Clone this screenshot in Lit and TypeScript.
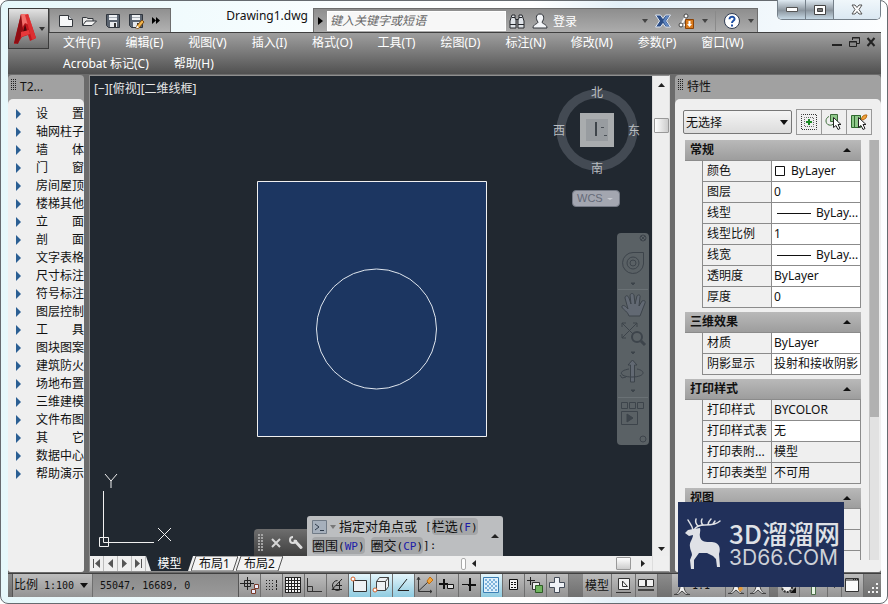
import { LitElement, html, css, svg, nothing } from "lit";
import { customElement } from "lit/decorators.js";
import { classMap } from "lit/directives/class-map.js";

const shared = css`
  * { box-sizing: border-box; }
  button, input, select {
    font: inherit; color: inherit; border: 0; padding: 0; margin: 0;
    background: none; border-radius: 0; outline: 0; white-space: nowrap;
  }
  svg { display: block; flex: none; }
  ul { list-style: none; margin: 0; padding: 0; }
`;

const icon = (w: number, h: number, body: unknown) =>
  html`<svg width=${w} height=${h} viewBox="0 0 ${w} ${h}" fill="none" aria-hidden="true">${body}</svg>`;

const caret = (color = "#222") => icon(6, 4, svg`<path d="M0 0h6L3 4z" fill=${color} />`);

/* ---------- title bar and menu ---------- */

const MENUS = ["文件(F)", "编辑(E)", "视图(V)", "插入(I)", "格式(O)", "工具(T)", "绘图(D)",
  "标注(N)", "修改(M)", "参数(P)", "窗口(W)", "Acrobat 标记(C)", "帮助(H)"];

const floppy = svg`
  <path d="M1.500 1.500h13v13h-11l-2-2z" fill="#5b6470" stroke="#2f353d" />
  <path d="M4 2h8v5H4z" fill="#eef1f4" /><path d="M4 4.500h8" stroke="#a9b0b8" />
  <path d="M5 9h7v5H5z" fill="#e6e9ec" /><path d="M9 10h2v4H9z" fill="#333" />`;

const QUICK = [
  { name: "新建", art: icon(16, 14, svg`<path d="M1.500 1.500h9l4 4v7h-13z" fill="#f6f7f8" stroke="#33373c" /><path d="M10.500 1.500v4h4" fill="#d5d9de" stroke="#33373c" />`) },
  { name: "打开", art: icon(17, 14, svg`<path d="M1.500 11V3.500h4l1.500 1h5V7" fill="#e5e5e5" stroke="#33373c" /><path d="M1.500 11.500 5 7h10.500L11 11.500z" fill="#f2f2f2" stroke="#33373c" />`) },
  { name: "保存", art: icon(16, 16, floppy) },
  { name: "另存为", art: icon(17, 16, svg`${floppy}<path d="m8 15.500 1-3 5-5.500 2 2-5 6z" fill="#f3b64c" stroke="#7b4a12" /><path d="m8 15.500 1-3 2 2z" fill="#fff" />`) },
];

@customElement("cad-header")
class CadHeader extends LitElement {
  static styles = [shared, css`
    :host { display: block; position: relative; color: #fff; font-size: 12px; }
    .title { display: flex; height: 32px; align-items: flex-end; }
    .app {
      position: absolute; left: 0; top: 8px; width: 41px; height: 41px; z-index: 1;
      display: flex; align-items: center; gap: 2px; padding-left: 4px; border: 1px solid #3b3b3b;
      background: linear-gradient(#e2e2e2, #a2a2a2 50%, #6c6c6c);
    }
    .quick {
      margin-left: 41px; width: 122px; height: 24px; display: flex; align-items: center;
      gap: 7px; padding-left: 8px; border: 1px solid #6d6d6d; border-bottom: 0;
      background: linear-gradient(#909090, #b2b2b2);
    }
    .name {
      flex: 1; min-width: 0; text-align: right; color: #111; font-size: 12px; font-weight: 400;
      margin: 0 5px 6px 0; line-height: 20px;
    }
    .info {
      flex: none; width: 445px; height: 24px; display: flex; align-items: center;
      border: 1px solid #6d6d6d; border-bottom: 0;
      background: linear-gradient(#8e8e8e, #acacac);
    }
    .play { width: 13px; height: 22px; display: grid; place-items: center; }
    .find {
      width: 179px; height: 20px; background: #f7f7f7; border: 1px solid #fff; padding: 0 2px;
      font-style: italic; color: #555;
    }
    .find::placeholder { color: #666; opacity: 1; }
    .tools { flex: 1; display: flex; align-items: center; padding: 0 3px; gap: 7px; }
    .user { display: flex; align-items: center; gap: 5px; }
    .push { margin-left: auto; }
    .rule { width: 1px; height: 20px; background: #8a8a8a; }
    .wins {
      align-self: flex-start; display: flex; margin-left: 19px; height: 20px;
      border: 1px solid #75808a; border-top: 0; border-radius: 0 0 5px 5px; overflow: hidden;
    }
    .wins button { width: 28px; display: grid; place-items: center; border-right: 1px solid #75808a;
      background: linear-gradient(#dfeaf2, #8b959e 55%, #c6d8e4); }
    .wins .close { width: 46px; border: 0; background: linear-gradient(#f0f7fb, #dbe8f2); }
    .bar {
      display: flex; align-items: flex-start; box-shadow: inset 0 1px #3f3f3f;
      background: linear-gradient(#a0a0a0, #7d7d7d 45%, #505050); padding-left: 55px;
    }
    nav { flex: 1; display: flex; flex-wrap: wrap; column-gap: 25px; }
    nav button { height: 21px; line-height: 21px; }
    .doc { display: flex; align-items: center; gap: 5px; padding: 0 4px; height: 20px; }
  `];

  render() {
    return html`
      <button class="app" aria-label="应用程序菜单">
        ${icon(24, 34, svg`
          <path d="M8 2h7l8 24-6 3-2-6-6 2-4 6-4 1z" fill="#c2161d" />
          <path d="M8 2h7l4 12-7-3-5 8z" fill="#f2706c" />
          <path d="M8 2 1 31l4 1 5-14z" fill="#8f0d13" />
          <path d="m12 12 2 7-4 1z" fill="#4e080c" />
          <path d="m8 20 8-2 1 4-9 3z" fill="#e8383a" />
          <path d="m12 3 3-1 8 24-4 2z" fill="#dd2f31" />`)}
        ${caret("#333")}
      </button>
      <div class="title">
        <div class="quick">
          ${QUICK.map((q) => html`<button aria-label=${q.name}>${q.art}</button>`)}
          <button aria-label="更多">${icon(8, 7, svg`<path d="m0 0 4 3.500L0 7zM4 0l4 3.500L4 7z" fill="#000" />`)}</button>
        </div>
        <h1 class="name">Drawing1.dwg</h1>
        <div class="info">
          <button class="play" aria-label="展开">${icon(5, 8, svg`<path d="m0 0 5 4-5 4z" fill="#000" />`)}</button>
          <input class="find" aria-label="搜索" placeholder="键入关键字或短语" />
          <div class="tools">
            <button aria-label="查找">${icon(16, 16, svg`
              <path d="M3 2h3v3l1 2v8H1V8zM10 2h3l2 6v7H9V7l1-2z" fill="#dfe3e8" stroke="#26292d" />
              <path d="M7 6.500h2M1 11.500h6M9 11.500h6M3 4.500h3M10 4.500h3" stroke="#26292d" />`)}</button>
            <button class="user">${icon(16, 16, svg`
              <path d="M8 1c5 0 4 6 2 8 0 2 5 2 5 6H1c0-4 5-4 5-6C4 7 3 1 8 1z" fill="#f3f5f8" stroke="#30343a" />`)}<span>登录</span></button>
            <button class="push" aria-label="登录选项">${caret("#444")}</button>
            <button aria-label="Exchange">${icon(16, 14, svg`
              <path d="M.5 1h5l2.500 3.500L10.500 1h5l-4 6 4 6h-5L8 9.500 5.500 13h-5l4-6z" fill="#2b4d86" stroke="#dfe7f3" />
              <path d="M11 2h3l-3.500 5 3.500 5h-3L8 7z" fill="#5f85bf" />`)}</button>
            <button aria-label="A360">${icon(17, 16, svg`
              <path d="M8 3 3 12h6" stroke="#f5f5f5" stroke-width="2" /><circle cx="8" cy="3" r="2" fill="#fff" stroke="#444" /><circle cx="3" cy="12" r="2" fill="#fff" stroke="#444" />
              <path d="M7.500 6.500h8v9h-8z" fill="#d97a1c" stroke="#8a4207" /><path d="M10.500 8h2v3H14l-2.500 3L9 11h1.500z" fill="#fff" />`)}</button>
            <button aria-label="A360 选项">${caret("#444")}</button>
            <span class="rule"></span>
            <button aria-label="帮助">${icon(18, 18, svg`
              <circle cx="9" cy="9" r="7.500" fill="#fff" stroke="#2f3b52" />
              <path d="M6.500 7.200C6.500 3.800 12 4 11.500 7.200 11.300 8.800 9 9 9 11" stroke="#1d4fa5" stroke-width="2" /><path d="M8 12.500h2v2H8z" fill="#1d4fa5" />`)}</button>
            <button aria-label="帮助选项">${caret("#444")}</button>
          </div>
        </div>
        <div class="wins">
          <button aria-label="最小化">${icon(12, 5, svg`<path d="M.5 .5h11v4H.5z" fill="#fff" stroke="#555" />`)}</button>
          <button aria-label="最大化">${icon(12, 10, svg`<path d="M.5 .5h11v9H.5z" fill="#fff" stroke="#444" /><path d="M3.500 3.500h5v3h-5z" fill="#777" stroke="#444" />`)}</button>
          <button class="close" aria-label="关闭">${icon(12, 11, svg`<path d="M1 1h3l2 2.500L8 1h3L8 5.500 11 10H8L6 7.500 4 10H1l3-4.500z" fill="#fff" stroke="#555" />`)}</button>
        </div>
      </div>
      <div class="bar">
        <nav>${MENUS.map((m) => html`<button>${m}</button>`)}</nav>
        <div class="doc">
          <button aria-label="最小化文档">${icon(11, 10, svg`<path d="M0 8h10" stroke="#222" stroke-width="2" />`)}</button>
          <button aria-label="还原文档">${icon(13, 12, svg`<path d="M4.500 4V1.500h7v6H9M4 2h8" stroke="#222" /><path d="M1.500 5.500h7v5h-7zM1 6h8" stroke="#222" />`)}</button>
          <button aria-label="关闭文档">${icon(11, 10, svg`<path d="m1.500 1 7 8m0-8-7 8" stroke="#222" stroke-width="2" />`)}</button>
        </div>
      </div>`;
  }
}

/* ---------- palettes ---------- */

const paletteStyles = css`
  :host { display: flex; flex-direction: column; font-size: 12px; color: #111; min-width: 0; }
  .head {
    height: 24px; display: flex; align-items: center; gap: 4px; padding-left: 3px; flex: none;
    background: #a1a1a1; border-radius: 4px 4px 0 0;
  }
  h2 { margin: 0; font-size: 12px; font-weight: 400; line-height: 20px; }
  .grip { width: 5px; height: 12px; align-self: flex-start; margin-top: 4px;
    background:
      repeating-linear-gradient(transparent 0 1px, #a1a1a1 1px 2px),
      repeating-linear-gradient(90deg, #222 0 1px, transparent 1px 2px); }
  .body { flex: 1; background: #efefef; border-radius: 5px 5px 3px 3px; min-height: 0; }
  .under { flex: 1; display: flex; flex-direction: column; background: #a1a1a1; border-radius: 0 0 3px 3px; min-height: 0; }
`;

const TOOLS = ["设　　置", "轴网柱子", "墙　　体", "门　　窗", "房间屋顶", "楼梯其他", "立　　面",
  "剖　　面", "文字表格", "尺寸标注", "符号标注", "图层控制", "工　　具", "图块图案", "建筑防火",
  "场地布置", "三维建模", "文件布图", "其　　它", "数据中心", "帮助演示"];

@customElement("cad-tools")
class CadTools extends LitElement {
  static styles = [shared, paletteStyles, css`
    .body { padding-top: 6px; }
    li button { display: flex; align-items: center; width: 100%; height: 18px; padding-left: 8px; gap: 15px; line-height: 18px; }
  `];
  render() {
    return html`
      <div class="head"><span class="grip"></span><h2>T2...</h2></div>
      <div class="under"><ul class="body">
        ${TOOLS.map((t) => html`<li><button>${icon(5, 10, svg`<path d="m0 0 5 5-5 5z" fill="#2b5f93" />`)}<span>${t}</span></button></li>`)}
      </ul></div>`;
  }
}

type Row = { k: string; v: string; mark?: "swatch" | "line"; ro?: boolean };
const SECTIONS: { name: string; rows: Row[] }[] = [
  { name: "常规", rows: [
    { k: "颜色", v: "ByLayer", mark: "swatch" }, { k: "图层", v: "0" },
    { k: "线型", v: "ByLay...", mark: "line" }, { k: "线型比例", v: "1" },
    { k: "线宽", v: "ByLay...", mark: "line" }, { k: "透明度", v: "ByLayer" }, { k: "厚度", v: "0" }] },
  { name: "三维效果", rows: [{ k: "材质", v: "ByLayer" }, { k: "阴影显示", v: "投射和接收阴影" }] },
  { name: "打印样式", rows: [
    { k: "打印样式", v: "BYCOLOR", ro: true }, { k: "打印样式表", v: "无" },
    { k: "打印表附...", v: "模型", ro: true }, { k: "打印表类型", v: "不可用", ro: true }] },
  { name: "视图", rows: [{ k: "", v: "", ro: true }, { k: "", v: "", ro: true }, { k: "", v: "", ro: true }] },
];

const cursor = svg`<path d="M8.500 4.500v10l2.500-2 2 4 2-1-2-4h3z" fill="#fff" stroke="#222" />`;
const PICKS = [
  { name: "切换 PICKADD", art: icon(18, 18, svg`
    <path d="M1.500 1.500h15v15h-15z" stroke="#333" stroke-dasharray="1 1" stroke-dashoffset=".5" />
    <path d="M4.500 4.500h9v9h-9z" stroke="#666" stroke-dasharray="1 1" stroke-dashoffset=".5" />
    <path d="M9 6v6M6 9h6" stroke="#1c8a26" stroke-width="2" />`) },
  { name: "选择对象", art: icon(18, 18, svg`
    <path d="M5.500 1.500h7v7h-7z" fill="#8fc98a" stroke="#3d6b3a" /><path d="M4 3.500C0 5 0 11 4 12c2 .5 4 0 5-2" stroke="#3d6b3a" />${cursor}`) },
  { name: "快速选择", art: icon(18, 18, svg`
    <path d="M1.500 2.500h9v12h-9z" fill="#8fc98a" stroke="#2f6a2e" /><path d="M4.500 2.500v12" stroke="#2f6a2e" />
    <path d="m11 6 2-3 2-1 2 0-1 3-3 2z" fill="#f0a53c" stroke="#b86912" />${cursor}`) },
];

@customElement("cad-properties")
class CadProperties extends LitElement {
  static styles = [shared, paletteStyles, css`
    .body { display: flex; flex-direction: column; padding: 10px 2px 12px 8px; }
    .pick { display: flex; align-items: center; gap: 4px; height: 26px; flex: none; }
    .combo { position: relative; width: 109px; }
    select {
      appearance: none; width: 100%; height: 24px; border: 1px solid #777; border-radius: 2px; padding-left: 2px;
      background: linear-gradient(#f4f4f4, #dcdcdc);
    }
    .combo svg { position: absolute; right: 4px; top: 10px; pointer-events: none; }
    .btns { display: flex; border: 1px solid #999; border-right: 0; }
    .btns button { width: 25px; height: 24px; display: grid; place-items: center; border-right: 1px solid #999; }
    .scroll { display: flex; flex: 1 1 0; min-height: 0; margin-top: 5px; justify-content: space-between; padding-left: 2px; }
    .list { width: 176px; overflow: hidden; }
    section { margin-bottom: 4px; }
    h3 { margin: 0; font-size: 12px; }
    h3 button {
      display: flex; width: 100%; height: 21px; align-items: center; justify-content: space-between;
      padding: 0 10px 0 5px; font-weight: 700; line-height: 20px;
      background: linear-gradient(#b9b9b9, #9d9d9d); border-bottom: 1px solid #8b8b8b;
    }
    table { border-spacing: 0; margin-left: 17px; width: 159px; table-layout: fixed; }
    th, td {
      height: 21px; padding: 0 0 0 4px; line-height: 20px; text-align: left; font-weight: 400; white-space: nowrap;
      border: solid #8b8b8b; border-width: 0 0 1px 1px; background: #f0f0f0; overflow: hidden;
    }
    th { width: 69px; }
    td { background: #fff; border-right-width: 1px; padding-left: 2px; }
    td.ro { background: #efefef; }
    .val { display: flex; align-items: center; }
    .swatch { margin: 0 5px 0 1px; }
    .line { margin-right: 5px; }
    .track { width: 10px; background: #e2e2e2; border-left: 1px solid #c4c4c4; }
    .thumb { height: 66%; background: #b1b1b1; }
  `];
  render() {
    return html`
      <div class="head"><span class="grip"></span><h2>特性</h2></div>
      <div class="under"><div class="body">
        <div class="pick">
          <label class="combo">
            <select aria-label="选择"><option>无选择</option></select>
            ${icon(8, 5, svg`<path d="M0 0h8L4 5z" fill="#111" />`)}
          </label>
          <div class="btns">${PICKS.map((p) => html`<button aria-label=${p.name}>${p.art}</button>`)}</div>
        </div>
        <div class="scroll">
          <div class="list">
            ${SECTIONS.map((s) => html`<section>
              <h3><button><span>${s.name}</span>${icon(8, 4, svg`<path d="M0 4h8L4 0z" fill="#111" />`)}</button></h3>
              <table>${s.rows.map((r) => html`<tr><th scope="row">${r.k}</th>
                <td class=${classMap({ ro: !!r.ro })}><div class="val">
                  ${r.mark === "swatch" ? html`<span class="swatch">${icon(11, 12, svg`<path d="M.5 1.500h9v9h-9z" fill="#fff" stroke="#111" />`)}</span>` : nothing}
                  ${r.mark === "line" ? html`<span class="line">${icon(37, 1, svg`<path d="M3 .5h34" stroke="#111" />`)}</span>` : nothing}
                  <span>${r.v}</span></div></td></tr>`)}</table>
            </section>`)}
          </div>
          <div class="track"><div class="thumb"></div></div>
        </div>
      </div></div>`;
  }
}

/* ---------- drawing area ---------- */

@customElement("cad-canvas")
class CadCanvas extends LitElement {
  static styles = [shared, css`
    :host {
      display: grid; grid-template: 1fr 15px / 1fr 17px; min-width: 0; min-height: 0;
      border: 1px solid #8f8f8f; border-right-color: #ddd; font-size: 12px;
    }
    .view { position: relative; background: #212830; overflow: hidden; min-height: 440px; color: #e6e6e6; }
    .labels { display: flex; padding: 3px 4px; line-height: 20px; }
    .shape { position: absolute; left: 167px; top: 105px; }
    .ucs { position: absolute; left: 6px; bottom: 2px; }
    .cube { position: absolute; right: 0; top: 7px; font-size: 12px; }
    .wcs {
      position: absolute; right: 32px; top: 114px; width: 48px; height: 17px; border-radius: 4px;
      border: 1px solid #747985; background: #a3a6b0; color: #656a78; font: 11px/15px "Liberation Sans", sans-serif;
      display: flex; align-items: center; justify-content: space-between; padding: 0 5px 0 4px;
    }
    .navbar { position: absolute; right: 3px; top: 157px; border-radius: 4px; background: #5a6165; }
    .cmd { position: absolute; left: 164px; bottom: 0; display: flex; align-items: flex-end; color: #111; }
    .knob {
      display: flex; align-items: center; gap: 7px; width: 53px; height: 27px; padding-left: 4px; border-radius: 4px 0 0 0;
      background: linear-gradient(#6e6e6e, #3f3f3f);
    }
    .dots { width: 6px; height: 18px; background: radial-gradient(circle at 1px 1px, #a5a5a5 1px, transparent 1px) 0 0 / 3px 3px; }
    .prompt {
      display: flex; width: 196px; height: 40px; align-items: center; justify-content: space-between; padding: 0 4px 0 5px;
      background: #bcbec0; border-radius: 3px 3px 0 0; font: 13px/19px "DejaVu Sans Mono", "Noto Sans CJK SC", monospace;
    }
    .row { display: flex; align-items: center; height: 19px; white-space: pre; }
    .row .ask { margin-right: 8px; }
    .row svg { margin-right: 3px; }
    .pill { height: 17px; line-height: 17px; border-radius: 4px; background: #a5a7a9; margin-right: 6px; }
    .pill:last-of-type { margin-right: 0; }
    .lat { font-size: 11px; }
    .key { color: #1c1ca8; }
    .v {
      background: #eeeeee; border-left: 1px solid #ddd; display: flex; flex-direction: column; align-items: center;
      padding: 7px 0 5px; gap: 31px;
    }
    .knobv { width: 15px; height: 15px; border: 1px solid #999; border-radius: 1px; background: linear-gradient(90deg, #fff, #ccc); }
    .push { margin-top: auto; }
    .bottom { grid-column: 1 / -1; display: flex; background: #efefef; color: #111; }
    .steps { display: flex; }
    .steps button { width: 14px; display: grid; place-items: center; border-right: 1px solid #bbb; }
    .tab { position: relative; display: grid; height: 15px; line-height: 15px; margin-right: -2px; }
    .tab svg, .tab span { grid-area: 1 / 1; }
    .tab span { place-self: center; position: relative; }
    .on { color: #fff; }
    .h { margin-left: auto; width: 191px; display: flex; align-items: center; padding: 0 7px 0 0; }
    .split { width: 5px; height: 12px; border: 1px solid #aaa; border-radius: 2px; background: #fff; margin-right: 6px; }
    .knobh { width: 15px; height: 13px; border: 1px solid #999; border-radius: 1px; background: linear-gradient(#fff, #ccc); margin-left: auto; margin-right: 10px; }
    .corner { width: 17px; border-left: 1px solid #ddd; }
  `];

  render() {
    const tab = (name: string, on = false) => html`<button class=${classMap({ tab: true, on })}>
      ${icon(47, 15, svg`<path d="M${on ? 0 : 5} 0${on ? "h47l-5 15H5z" : "h42l-5 15H0z"}" fill=${on ? "#212830" : "#f4f4f4"} stroke=${on ? "none" : "#555"} />`)}
      <span>${name}</span></button>`;
    return html`
      <div class="view">
        <div class="labels"><button>[−]</button><button>[俯视]</button><button>[二维线框]</button></div>
        <svg class="shape" width="231" height="257" viewBox="0 0 231 257">
          <path d="M.5 .5h229v255H.5z" fill="#1c3661" stroke="#f0f0f0" />
          <circle cx="119.500" cy="148" r="60" fill="none" stroke="#dfe6ee" />
        </svg>
        <svg class="ucs" width="78" height="82" viewBox="0 0 78 82" fill="none" stroke="#f0f0f0">
          <path d="M7.500 19v51.500H58M3.500 65.500h9v9h-9zM9 2l6 7 6-7M15 9v7M62 56l13 13M75 56 62 69" />
        </svg>
        <svg class="cube" width="110" height="96" viewBox="0 0 110 96" fill="#b9bdc1" text-anchor="middle">
          <circle cx="55" cy="47" r="36" fill="none" stroke="#434a53" stroke-width="9" />
          <path d="M38 30h34v34H38z" fill="#a9acae" /><path d="M44 36h22v22H44z" fill="#989ca0" />
          <path d="M54 39v14" stroke="#3f454b" stroke-width="2" /><path d="M59 44.500h3M62 52.500h3" stroke="#4b5157" />
          <text x="55" y="14">北</text><text x="55" y="90">南</text><text x="17" y="52">西</text><text x="92" y="52">东</text>
        </svg>
        <button class="wcs"><span>WCS</span>${icon(8, 4, svg`<path d="M1 1h6L4 3z" fill="#c9ccd3" />`)}</button>
        <svg class="navbar" width="32" height="212" viewBox="0 0 32 212" fill="none" stroke="#3d444b">
          <circle cx="26" cy="5" r="3" /><path d="m24 3 4 4m0-4-4 4" />
          <path d="M16 19.500h10.500V31A10.500 10.500 0 1 1 16 19.500z" /><circle cx="16" cy="30" r="6" /><circle cx="16" cy="30" r="3" />
          <path d="M1 56.500h30M1 164.500h30" stroke="#6a7175" />
          <path d="M14 50h4l-2 2zM14 119h4l-2 2zM14 157h4l-2 2z" fill="#3d444b" />
          <path d="M12 83c-2-6-8-7-7-10 2-2 5 2 6 3L8 65c0-3 3-3 4 0l2 6-1-9c1-2 3-2 4 0l1 9 2-8c1-2 4-1 3 1l-1 9 3-5c2-1 4 0 3 2l-5 13z" fill="#626973" />
          <path d="M5 90l15 15M20 90 5 105M5 94v-4h4M16 90h4v4M5 101v4h4" /><circle cx="20" cy="104" r="5" fill="#5a6165" stroke-width="2" /><path d="m24 108 4 4" stroke-width="3" />
          <path d="M13.500 149v-17H11l4.500-5 4.500 5h-2.500v17z" fill="#626973" /><path d="M12 136c-12 2-9 8 3 8s15-6 5-8M3 142l2 3 4-1" />
          <path d="M4.500 169.500h6v6h-6zM12.500 169.500h6v6h-6zM20.500 169.500h6v6h-6zM4.500 178.500h16v13h-16z" /><path d="m10 181 6 4-6 4z" fill="#3d444b" />
          <circle cx="26" cy="206" r="3" />
        </svg>
        <div class="cmd">
          <div class="knob"><span class="dots"></span>
            <button aria-label="关闭命令行">${icon(10, 10, svg`<path d="m1 1 8 8m0-8L1 9" stroke="#d5d5d5" stroke-width="2" />`)}</button>
            <button aria-label="自定义">${icon(15, 15, svg`<path d="M7 6 13 12.500" stroke="#ddd" stroke-width="3" stroke-linecap="round" /><path d="M5 2a3 3 0 1 0 3 3" stroke="#ddd" stroke-width="2" />`)}</button>
          </div>
          <div class="prompt">
            <div>
              <div class="row">${icon(15, 14, svg`<path d="M.5 .5h14v13H.5z" fill="#a6b0bc" stroke="#717b86" /><path d="m3 4 4 3-4 3M8 10.500h4" stroke="#2f3c4c" />`)}${caret("#777")}<span class="ask">指定对角点或</span><span class="lat">[</span><button class="pill">栏选<span class="lat">(<span class="key">F</span>)</span></button></div>
              <div class="row"><button class="pill">圈围<span class="lat">(<span class="key">WP</span>)</span></button><button class="pill">圈交<span class="lat">(<span class="key">CP</span>)</span></button><span class="lat">]:</span></div>
            </div>
            <button aria-label="展开历史">${icon(8, 4, svg`<path d="M0 4h8L4 0z" fill="#222" />`)}</button>
          </div>
        </div>
      </div>
      <div class="v">
        <button aria-label="向上">${icon(7, 4, svg`<path d="M0 4h7L3.500 0z" fill="#222" />`)}</button>
        <div class="knobv"></div>
        <button class="push" aria-label="向下">${icon(7, 4, svg`<path d="M0 0h7L3.500 4z" fill="#222" />`)}</button>
      </div>
      <div class="bottom">
        <div class="steps">
          <button aria-label="第一个">${icon(9, 9, svg`<path d="M1.500 0v9" stroke="#555" /><path d="M8 0v9L3 4.500z" fill="#555" />`)}</button>
          <button aria-label="上一个">${icon(9, 9, svg`<path d="M7 0v9L2 4.500z" fill="#555" />`)}</button>
          <button aria-label="下一个">${icon(9, 9, svg`<path d="M2 0v9l5-4.500z" fill="#555" />`)}</button>
          <button aria-label="最后一个">${icon(9, 9, svg`<path d="M7.500 0v9" stroke="#555" /><path d="M1 0v9l5-4.500z" fill="#555" />`)}</button>
        </div>
        ${tab("模型", true)}${tab("布局1")}${tab("布局2")}
        <div class="h"><span class="split"></span>
          <button aria-label="向左">${icon(4, 7, svg`<path d="M4 0v7L0 3.500z" fill="#222" />`)}</button>
          <span class="knobh"></span>
          <button aria-label="向右">${icon(4, 7, svg`<path d="M0 0v7l4-3.500z" fill="#222" />`)}</button>
        </div>
        <div class="corner"></div>
      </div>`;
  }
}

/* ---------- status bar ---------- */

const scaleMark = svg`<path d="M2 18.500c4 0 6-5 6-8V7h4v3.500c0 3 2 8 6 8h-4L10 15l-4 3.500z" fill="#f2f2f2" stroke="#444" />`;
const MODES: { name: string; on?: boolean; art: unknown }[] = [
  { name: "推断约束", art: svg`<path d="M1 8.500h14M8.500 2v13" stroke="#222" /><path d="M5.500 5.500h6v6h-6z" stroke="#222" /><path d="M15.500 9.500h4v4h-4zM12.500 14.500h4v4h-4z" fill="#eef" stroke="#7a3b2a" />` },
  { name: "捕捉", art: svg`<path d="M5 5.500h9M5 8.500h9M5 11.500h9M5 14.500h9" stroke="#222" stroke-dasharray="1 2" /><path d="M15.500 5v10" stroke="#222" stroke-dasharray="3 1" />` },
  { name: "栅格", art: svg`<path d="M2 2h16v16H2z" fill="#f4f4f4" /><path d="M2.500 2v16M5.500 2v16M8.500 2v16M11.500 2v16M14.500 2v16M17.500 2v16M2 2.500h16M2 5.500h16M2 8.500h16M2 11.500h16M2 14.500h16M2 17.500h16" stroke="#222" />` },
  { name: "正交", art: svg`<path d="M2.500 3v13.500H17M2.500 11.500h5v5" stroke="#333" />` },
  { name: "极轴", art: svg`<path d="M15 4 5 14.500h10M10.500 5.500a5 5 0 1 0 3 9M9 10.500h6M12.500 7v8" stroke="#222" />` },
  { name: "对象捕捉", on: true, art: svg`<path d="M4.500 5.500h13v11h-13z" fill="#eef1f4" stroke="#333" /><circle cx="4" cy="4" r="2" fill="#fff" stroke="#d4602a" />` },
  { name: "三维捕捉", on: true, art: svg`<path d="m5.500 6.500 3-4h9v9l-3 4h-9zM5.500 6.500h9v9M14.500 6.500l3-4" fill="#eef1f4" stroke="#444" /><circle cx="4" cy="15" r="2" fill="#fff" stroke="#d4602a" />` },
  { name: "对象追踪", on: true, art: svg`<path d="M14 4 5 15.500h11" stroke="#222" />` },
  { name: "动态 UCS", art: svg`<path d="M3.500 3v13.500H17M3.500 16 13 7M2 5l1.500-3L5 5M15 15l2 1.500-2 1.500" stroke="#333" /><path d="m12 6 3-4 3 3-4 4z" fill="#f0a53c" stroke="#c46f10" />` },
  { name: "动态输入", art: svg`<path d="M2 9h9M7 4v10" stroke="#111" stroke-width="2" /><path d="M10.500 9.500h6v4h-6z" fill="#ddd" stroke="#111" />` },
  { name: "线宽", art: svg`<path d="M3 9.500h6" stroke="#111" /><path d="M9 10h8M11 3v13" stroke="#111" stroke-width="2" />` },
  { name: "透明度", on: true, art: svg`<path d="M2.500 2.500h15v15h-15z" fill="#dff0fb" stroke="#3b7fb5" /><path d="M4 5h12M4 9h12M4 13h12" stroke="#7fb4dc" stroke-width="2" stroke-dasharray="2 2" /><path d="M6 7h10M6 11h10M6 15h10" stroke="#7fb4dc" stroke-width="2" stroke-dasharray="2 2" />` },
  { name: "快捷特性", art: svg`<path d="M6.500 4.500h8v10h-8z" fill="#f2f2f2" stroke="#111" /><path d="M8 7.500h2M11 7.500h2M8 9.500h2M11 9.500h2M8 12.500h2M11 12.500h2" stroke="#111" />` },
  { name: "选择循环", art: svg`<path d="M2 5.500h8M5.500 2v8" stroke="#222" /><path d="M7.500 7.500h7v7h-7z" fill="#eee" stroke="#333" /><path d="M10.500 10.500h7v7h-7z" fill="#6fb45e" stroke="#2e5b27" />` },
  { name: "注释监视器", art: svg`<path d="M7.500 2.500h5v5h5v5h-5v5h-5v-5h-5v-5h5z" fill="#f0f3f7" stroke="#444c58" />` },
];

@customElement("cad-status")
class CadStatus extends LitElement {
  static styles = [shared, css`
    :host {
      display: flex; height: 24px; border-top: 1px solid #3f3f3f; color: #111;
      background: linear-gradient(#8c8c8c, #707070); font: 12px/20px "DejaVu Sans Mono", "Noto Sans CJK SC", monospace;
    }
    .num { font-size: 10px; }
    button { background: linear-gradient(#bdbdbd, #939393); border-right: 1px solid #6f6f6f; flex: none; display: grid; place-items: center; }
    .scale { margin-left: 4px; width: 81px; display: flex; align-items: center; justify-content: space-between; border-left: 1px solid #555; padding: 0 4px 0 1px; }
    .coord { flex: none; width: 146px; padding-left: 7px; line-height: 23px; background: linear-gradient(#8b8b8b, #9a9a9a); border-right: 1px solid #555; }
    .mode { width: 22px; place-items: start; padding-top: 1px; }
    .on { background: linear-gradient(#e4f5fb, #8fcbe0); }
    .gap { width: 14px; flex: none; }
    .thin { width: 8px; flex: none; }
    .text { width: 29px; }
    .wide { width: 24px; }
    .lock { width: 28px; }
    .long { width: 54px; display: flex; align-items: center; }
    .push { margin-left: auto; }
    .grip { width: 17px; flex: none; display: grid; place-items: end; padding: 0 2px 2px 0; }
  `];
  render() {
    return html`
      <button class="scale"><span>比例<span class="num"> 1:100</span></span>${icon(8, 5, svg`<path d="M0 0h8L4 5z" fill="#111" />`)}</button>
      <output class="coord num">55047, 16689, 0</output>
      ${MODES.map((m) => html`<button class=${classMap({ mode: true, on: !!m.on })} aria-label=${m.name}>${icon(20, 20, m.art)}</button>`)}
      <span class="gap"></span>
      <button class="text">模型</button>
      <button class="wide" aria-label="快速查看布局">${icon(17, 19, svg`<path d="M3.500 2.500h11v11h-11zM1 16.500h15" fill="#f2f2f2" stroke="#333" /><path d="M7.500 5v5.500h5z" stroke="#333" />`)}</button>
      <button class="mode" aria-label="快速查看图形">${icon(20, 20, svg`<path d="M2.500 4.500h7v7h-7zM10.500 4.500h7v7h-7z" fill="#f2f2f2" stroke="#333" /><path d="M2 15h16" stroke="#444" stroke-width="2" />`)}</button>
      <span class="gap push"></span>
      <button class="long" aria-label="注释比例">${icon(20, 20, scaleMark)}<span class="num">1:1</span></button>
      <button class="mode" aria-label="注释可见性">${icon(20, 20, svg`${scaleMark}<path d="m12 14 3-4 2 4-3 3z" fill="#e39a3c" />`)}</button>
      <button class="mode" aria-label="自动缩放">${icon(20, 20, scaleMark)}</button>
      <span class="thin"></span>
      <button class="mode" aria-label="切换工作空间">${icon(20, 20, svg`<circle cx="9" cy="12" r="5" fill="#eee" stroke="#333" stroke-width="2" stroke-dasharray="2 1" /><path d="M18 12v6h-6z" fill="#111" />`)}</button>
      <button class="lock" aria-label="锁定">${icon(19, 20, svg`<path d="M7.500 9.500h4v9h-4z" fill="#e7f4e5" stroke="#4a6d47" />`)}</button>
      <button class="gap" aria-label="菜单">${icon(5, 4, svg`<path d="M0 0h5L2.500 4z" fill="#111" />`)}</button>
      <button class="mode" aria-label="全屏显示">${icon(20, 20, svg`<path d="M3.500 3.500h13v13h-13z" fill="#fafafa" stroke="#333" /><path d="M4 5h12" stroke="#888" stroke-width="2" /><path d="M11 4.500h5" stroke="#222" stroke-dasharray="1 1" />`)}</button>
      <span class="grip">${icon(12, 12, svg`<path d="M9 0h2v2H9zM9 4h2v2H9zM9 8h2v2H9zM5 4h2v2H5zM5 8h2v2H5zM1 8h2v2H1z" fill="#f2f2f2" />`)}</span>`;
  }
}

/* ---------- brand plate ---------- */

@customElement("brand-plate")
class BrandPlate extends LitElement {
  static styles = [shared, css`
    :host {
      display: flex; align-items: center; gap: 6px; width: 166px; height: 85px; padding: 0 0 4px 6px;
      background: #21305a; color: #dfe1e6;
    }
    .names { display: flex; flex-direction: column; }
    .cn { font: 500 26px/30px "Noto Sans CJK SC", sans-serif; }
    .en { font: 21px/20px Inter, "Liberation Sans", sans-serif; color: #cdd0d8; }
  `];
  render() {
    return html`
      ${icon(39, 52, svg`
        <path d="M9 12 4 13 1 16l4 3 4-1c0 4-4 7-3 12 0 3 2 5 2 8l-2 5 1 9h3l0-9 5-7 8 0 6 3 3 3 1 8h3l-1-13c1-3 1-6 0-8-2-4-6-4-10-4-5 0-8-1-9-5-1-3 1-6 0-9z" fill="#dfe1e6" />
        <path d="M9 13C8 8 6 7 4 3M10 13c2-4 6-5 11-5 6 0 12-1 15-4M14 9c-2-2-3-4-2-7M19 8c-2-2-2-4-1-6M24 8c0-2 1-4 3-6M29 7l2-3" stroke="#dfe1e6" stroke-width="1.500" stroke-linecap="round" />
      `)}
      <div class="names"><span class="cn">3D溜溜网</span><span class="en">3D66.COM</span></div>`;
  }
}

@customElement("app-root")
class AppRoot extends LitElement {
  static styles = [shared, css`
    :host {
      display: block; position: relative; background: #fff;
      font-family: "Noto Sans", "Noto Sans CJK SC", sans-serif;
    }
    .window {
      min-height: 100vh; display: flex; flex-direction: column; padding: 0 6px 6px 7px;
      border: 1px solid #666b70; border-radius: 8px;
      background: linear-gradient(90deg, #e6f8fb, #fbfeff 40%, #fff 60%, #e3f0f8 70%, #fdfeff);
    }
    cad-header { margin-top: -1px; }
    main {
      flex: 1; display: grid; grid-template-columns: 76px 1fr 206px; gap: 5px; padding: 1px 0 1px;
      background: #6b6b6b; min-height: 0;
    }
    brand-plate { position: absolute; right: 44px; bottom: 17px; }
  `];
  render() {
    return html`
      <div class="window">
        <cad-header></cad-header>
        <main>
          <cad-tools></cad-tools>
          <cad-canvas></cad-canvas>
          <cad-properties></cad-properties>
        </main>
        <cad-status></cad-status>
      </div>
      <brand-plate></brand-plate>`;
  }
}
